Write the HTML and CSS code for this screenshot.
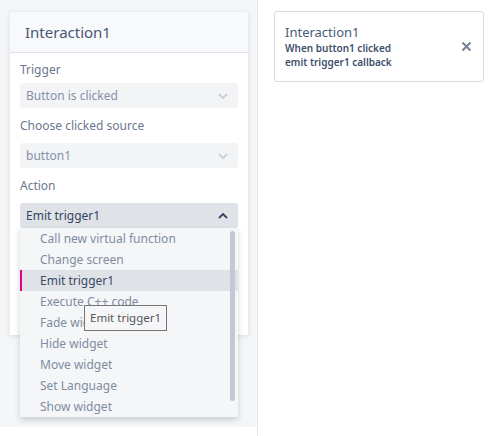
FILE: index.html
```html
<!DOCTYPE html>
<html>
<head>
<meta charset="utf-8">
<link rel="stylesheet" href="styles.css">
</head>
<body>
<div class="app">
  <aside class="side">
    <div class="side-bg">
      <div class="card">
        <div class="card-head">Interaction1</div>
        <div class="card-body">
          <div class="label first">Trigger</div>
          <div class="select"><span>Button is clicked</span>
            <svg class="chev" width="10" height="6" viewBox="0 0 10 6"><path d="M1 1l4 4 4-4" fill="none" stroke="#c3c9d2" stroke-width="1.6"/></svg>
          </div>
          <div class="label">Choose clicked source</div>
          <div class="select"><span>button1</span>
            <svg class="chev" width="10" height="6" viewBox="0 0 10 6"><path d="M1 1l4 4 4-4" fill="none" stroke="#c3c9d2" stroke-width="1.6"/></svg>
          </div>
          <div class="label">Action</div>
          <div class="dd">
            <div class="select open"><span>Emit trigger1</span>
              <svg class="chev" width="10" height="6" viewBox="0 0 10 6"><path d="M1 5l4-4 4 4" fill="none" stroke="#3b4a66" stroke-width="2"/></svg>
            </div>
            <ul class="menu">
              <li>Call new virtual function</li>
              <li>Change screen</li>
              <li class="active">Emit trigger1</li>
              <li>Execute C++ code</li>
              <li>Fade widget</li>
              <li>Hide widget</li>
              <li>Move widget</li>
              <li>Set Language</li>
              <li>Show widget</li>
            </ul>
            <div class="scroll"></div>
            <div class="tip">Emit trigger1</div>
          </div>
        </div>
      </div>
    </div>
  </aside>
  <main class="main">
    <div class="item">
      <div class="item-text">
        <div class="item-title">Interaction1</div>
        <div class="item-desc">When button1 clicked<br>emit trigger1 callback</div>
      </div>
      <svg class="close" width="11" height="11" viewBox="0 0 11 11"><path d="M1.5 1.5l8 8M9.5 1.5l-8 8" stroke="#7a8699" stroke-width="2.2" fill="none"/></svg>
    </div>
  </main>
</div>
</body>
</html>
```
FILE: styles.css
```css
* { box-sizing: border-box; }
html, body { margin: 0; padding: 0; }
body {
  font-family: "Noto Sans", "Open Sans", sans-serif;
  background: #fff;
  width: 492px;
  height: 436px;
  overflow: hidden;
}
.app { display: flex; height: 436px; }
.side {
  width: 258px;
  flex: none;
  border-right: 1px solid #e4e7eb;
}
.side-bg {
  background: #f5f6f8;
  height: 427px;
  padding: 12px 0 0 10px;
}
.card {
  width: 238px;
  height: 323px;
  background: #fff;
  box-shadow: 0 1px 5px rgba(30, 40, 60, 0.13);
}
.card-head {
  height: 41px;
  background: #f8f9fb;
  border-bottom: 1px solid #dde1e7;
  padding: 10px 0 0 15px;
  font-size: 15px;
  color: #475673;
}
.card-body { padding: 0 10px; }
.label {
  font-size: 12px;
  line-height: 16px;
  color: #6b788d;
  margin: 10px 0 9px;
}
.label.first { margin-top: 9px; margin-bottom: 5px; }
.select {
  height: 25px;
  border-radius: 3px;
  background: #f3f4f6;
  display: flex;
  align-items: center;
  justify-content: space-between;
  padding: 0 10px 0 6px;
  font-size: 12px;
  color: #8591a6;
}
.select.open { background: #dfe3e8; color: #34435f; }
.dd { position: relative; }
.menu {
  position: absolute;
  left: 0;
  top: 25px;
  width: 218px;
  margin: 0;
  padding: 0;
  list-style: none;
  background: #f5f6f8;
  box-shadow: 0 3px 6px rgba(30, 40, 60, 0.2);
  z-index: 2;
}
.menu li {
  height: 21px;
  line-height: 21px;
  padding-left: 20px;
  font-size: 12px;
  color: #7f8ca1;
  white-space: nowrap;
}
.menu li.active {
  background: #dfe3e8;
  color: #3b4a66;
  border-left: 2px solid #e5007d;
  padding-left: 18px;
}
.scroll {
  position: absolute;
  left: 210px;
  top: 28px;
  width: 5px;
  height: 170px;
  border-radius: 3px;
  background: #c2c9d3;
  z-index: 3;
}
.tip {
  position: absolute;
  left: 64px;
  top: 102px;
  height: 26px;
  padding: 0 5px;
  line-height: 24px;
  background: #f5f6f8;
  border: 1px solid #777;
  font-size: 11.5px;
  color: #555;
  z-index: 4;
  white-space: nowrap;
}
.main { flex: 1; padding: 11px 0 0 16px; }
.item {
  width: 210px;
  height: 71px;
  border: 1px solid #d6dbe2;
  border-radius: 3px;
  display: flex;
  align-items: center;
  justify-content: space-between;
  padding: 0 11px 0 10px;
}
.item-text { margin-top: 0; }
.item-title { font-size: 13px; line-height: 17px; color: #4a5a77; }
.item-desc { font-size: 10px; line-height: 14px; font-weight: 600; color: #3e4f6b; }
```
